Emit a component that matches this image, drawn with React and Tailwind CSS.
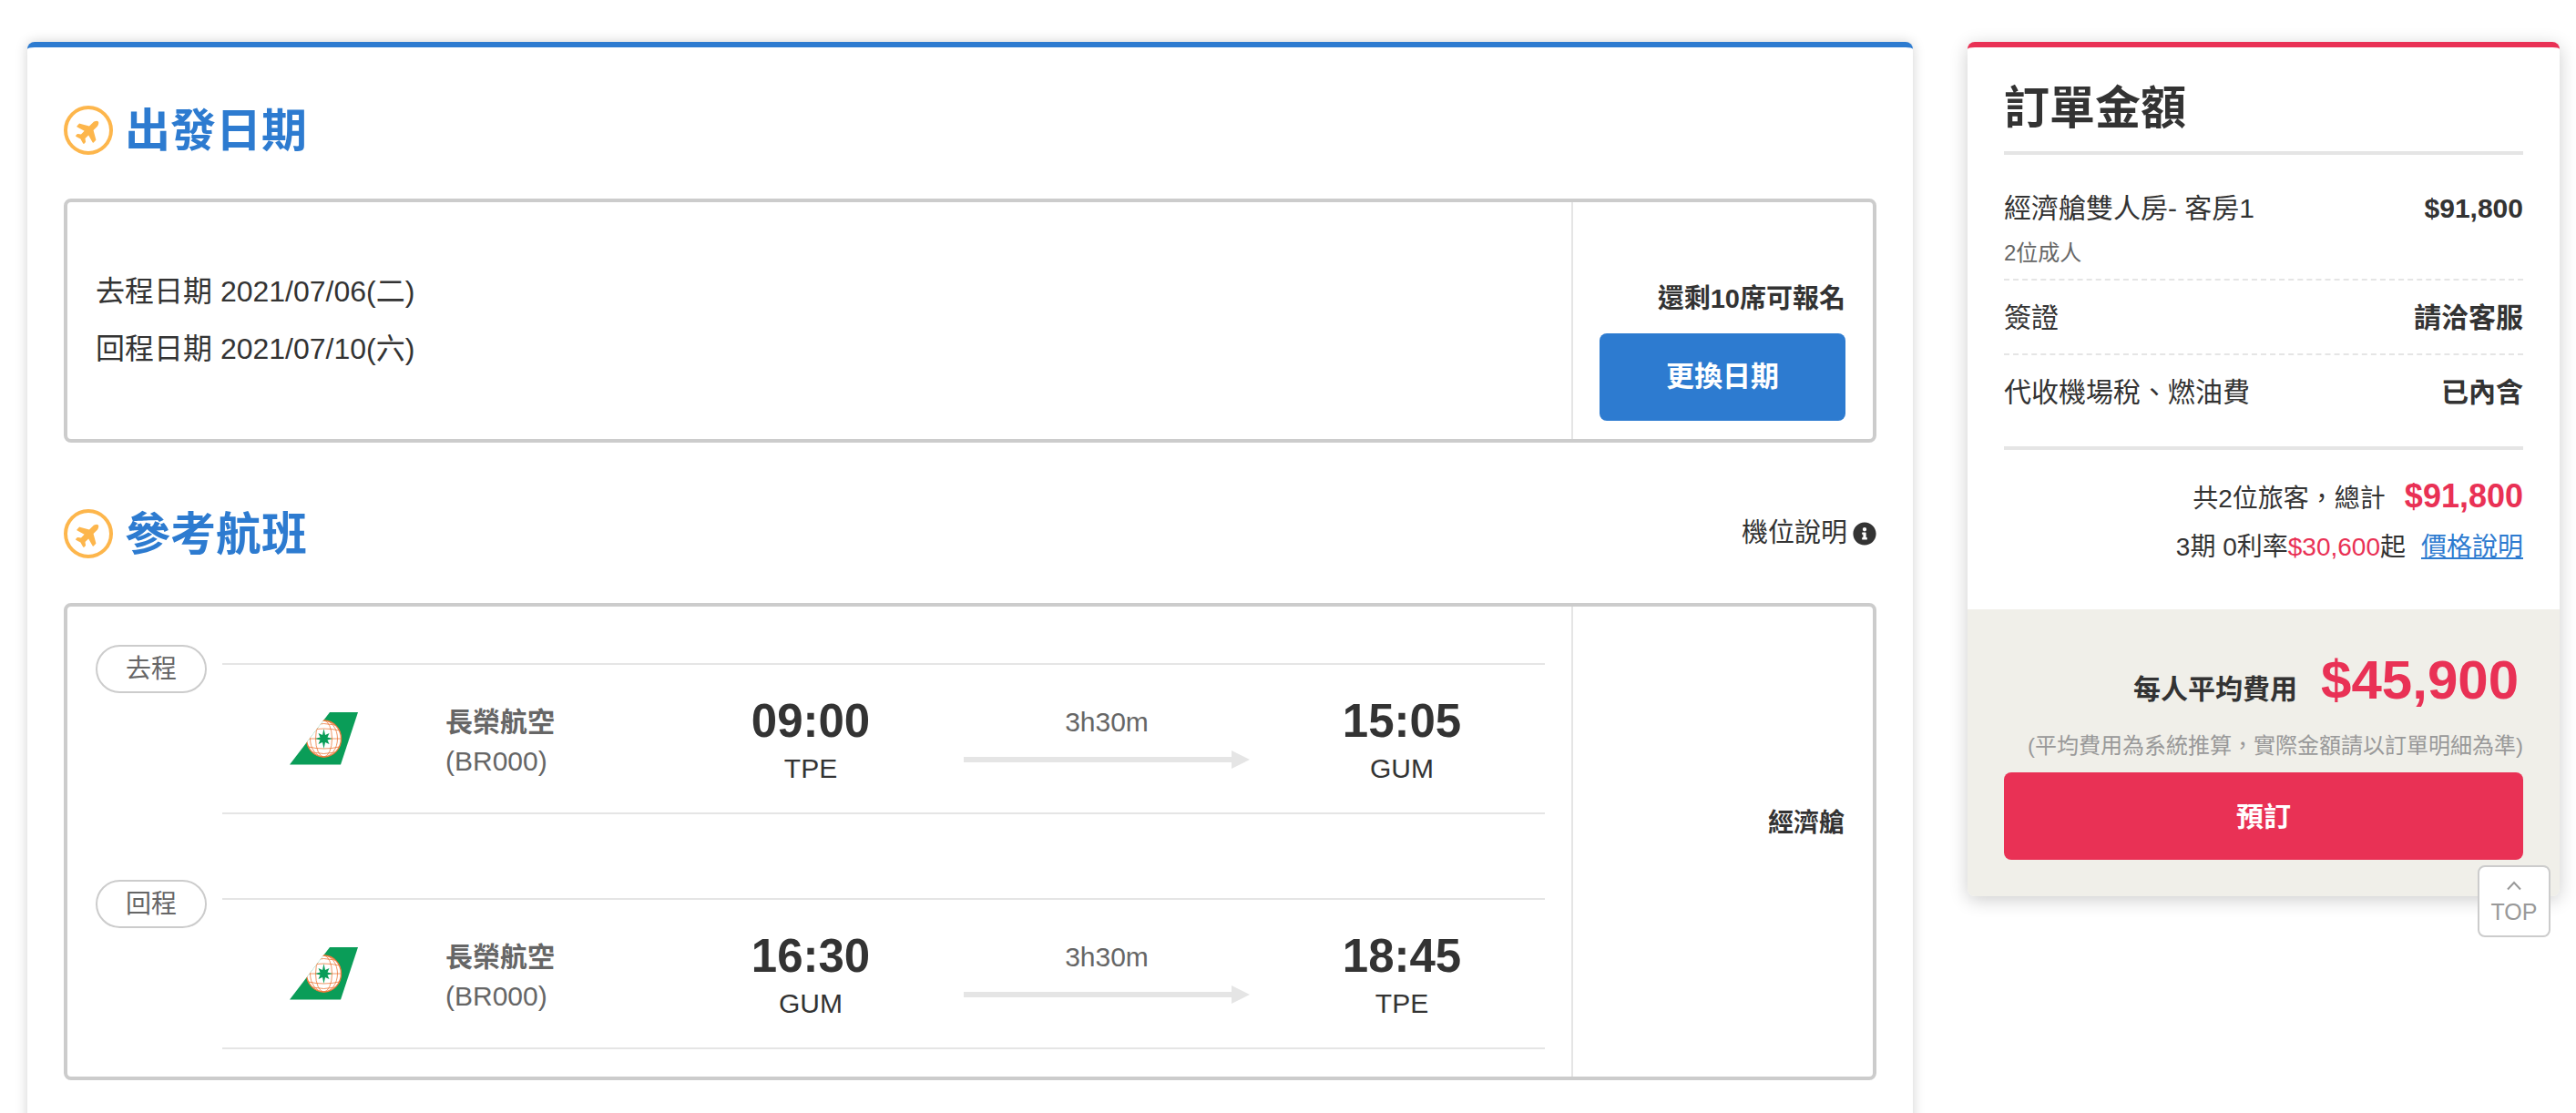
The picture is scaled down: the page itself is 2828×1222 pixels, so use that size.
import { FaPlane, FaInfoCircle } from 'react-icons/fa';

const legs = [
  { label: '去程', depart: '09:00', from: 'TPE', arrive: '15:05', to: 'GUM' },
  { label: '回程', depart: '16:30', from: 'GUM', arrive: '18:45', to: 'TPE' },
];

function SectionTitle({ children }) {
  return (
    <div className="flex items-center h-[54px]">
      <span className="flex items-center justify-center w-[54px] h-[54px] rounded-full border-[4px] border-[#fdb64c] shrink-0">
        <FaPlane className="w-[29px] h-[29px] text-[#fdb64c] -rotate-45" />
      </span>
      <h2 className="ml-[13px] text-[50px] leading-[54px] font-bold text-[#2d7bd0] translate-y-px">{children}</h2>
    </div>
  );
}

function EvaLogo({ id }) {
  const orange = '#ee7a3c';
  return (
    <svg width="76" height="58" viewBox="0 0 76 58" className="block">
      <defs>
        <clipPath id={id}>
          <polygon points="44,0 75,0 56,57.5 0,57.5" />
        </clipPath>
      </defs>
      <polygon points="44,0 75,0 56,57.5 0,57.5" fill="#0a9d58" />
      <g clipPath={`url(#${id})`}>
        <ellipse cx="37.5" cy="29" rx="19" ry="20" fill="#fff" stroke={orange} strokeWidth="1.4" />
        <g fill="none" stroke={orange} strokeWidth="0.8">
          <ellipse cx="37.5" cy="29" rx="9" ry="20" />
          <ellipse cx="37.5" cy="29" rx="15" ry="20" />
          <path d="M20.5 20 Q37.5 16 54.5 20" />
          <path d="M18.5 29 L56.5 29" />
          <path d="M20.5 38 Q37.5 42 54.5 38" />
          <path d="M25 14 Q37.5 11 50 14" />
          <path d="M25 44 Q37.5 47 50 44" />
        </g>
      </g>
      <polygon
        points="37.5,18 39,25 43.5,23 41.5,27.5 47,29 41.5,30.5 43.5,35 39,33 37.5,40 36,33 31.5,35 33.5,30.5 28,29 33.5,27.5 31.5,23 36,25"
        fill="#0a9d58"
      />
    </svg>
  );
}

function Leg({ leg }) {
  return (
    <div className="flex items-start">
      <span className="w-[122px] h-[53px] rounded-full border-2 border-[#ccc] flex items-center justify-center text-[28px] text-[#666] shrink-0">
        {leg.label}
      </span>
      <div className="ml-[17px] mt-[20px] w-[1452px] h-[166px] border-y-2 border-[#e5e5e5] grid grid-cols-[245px_261px_280px_370px_278px] items-center">
        <div className="pl-[74px]"><EvaLogo id={`tail-${leg.label}`} /></div>
        <div className="text-[30px] leading-[43px] text-[#666] translate-y-[3px]">
          <div className="font-bold">長榮航空</div>
          <div>(BR000)</div>
        </div>
        <div className="text-center text-[#333] translate-y-[4px]">
          <div className="text-[51px] leading-[52px] font-bold">{leg.depart}</div>
          <div className="text-[30px] leading-[42px] mt-[5px]">{leg.from}</div>
        </div>
        <div className="flex flex-col items-center -translate-y-[3px]">
          <div className="text-[30px] leading-[40px] text-[#666]">3h30m</div>
          <svg width="314" height="20" viewBox="0 0 314 20" className="block mt-[11px]">
            <rect x="0" y="7" width="295" height="6" fill="#e5e5e5" />
            <polygon points="294,0 314,10 294,20" fill="#e5e5e5" />
          </svg>
        </div>
        <div className="text-center text-[#333] translate-y-[4px]">
          <div className="text-[51px] leading-[52px] font-bold">{leg.arrive}</div>
          <div className="text-[30px] leading-[42px] mt-[5px]">{leg.to}</div>
        </div>
      </div>
    </div>
  );
}

function PriceRow({ label, value, dashed }) {
  return (
    <div className={`flex items-center justify-between text-[30px] text-[#333] ${dashed ? 'h-[82px] border-b-2 border-dashed border-[#e5e5e5]' : 'h-[80px]'}`}>
      <span>{label}</span>
      <span className="font-bold">{value}</span>
    </div>
  );
}

export default function App() {
  return (
    <div className="w-[2828px] h-[1222px] overflow-hidden bg-white pt-[46px] pl-[30px] flex items-start [font-family:'Liberation_Sans','Noto_Sans_CJK_TC',sans-serif] text-[#333]">

      {/* Main column */}
      <div className="w-[2070px] h-[1400px] shrink-0 bg-white rounded-t-[8px] border-t-[6px] border-[#2d7bd0] shadow-[0_0_14px_rgba(0,0,0,0.18)] px-[40px] pt-[64px]">
        <SectionTitle>出發日期</SectionTitle>

        <div className="mt-[48px] h-[268px] border-[4px] border-[#ccc] rounded-[8px] flex">
          <div className="flex-1 flex flex-col justify-center pl-[31px] text-[32px] leading-[63px]">
            <div>去程日期 2021/07/06(二)</div>
            <div>回程日期 2021/07/10(六)</div>
          </div>
          <div className="w-[331px] shrink-0 border-l-2 border-[#e5e5e5] flex flex-col items-end justify-end pr-[30px] pb-[20px]">
            <div className="text-[29px] leading-[40px] font-bold mb-[18px]">還剩10席可報名</div>
            <button className="w-[270px] h-[96px] rounded-[8px] bg-[#2d7bd0] text-white text-[31px] font-bold">更換日期</button>
          </div>
        </div>

        <div className="mt-[73px] flex items-center justify-between">
          <SectionTitle>參考航班</SectionTitle>
          <div className="flex items-center text-[29px]">
            機位說明
            <FaInfoCircle className="ml-[6px] w-[26px] h-[26px] text-[#333]" />
          </div>
        </div>

        <div className="mt-[49px] h-[524px] border-[4px] border-[#ccc] rounded-[8px] flex">
          <div className="flex-1 pl-[31px] pt-[42px] flex flex-col gap-[72px]">
            {legs.map(leg => <Leg key={leg.label} leg={leg} />)}
          </div>
          <div className="w-[331px] shrink-0 border-l-2 border-[#e5e5e5] flex items-center justify-end pr-[31px] pb-[40px] text-[28px] font-bold">
            經濟艙
          </div>
        </div>
      </div>

      {/* Order summary */}
      <div className="relative ml-[60px] w-[650px] shrink-0">
        <div className="bg-white rounded-[8px] border-t-[6px] border-[#e93155] shadow-[0_4px_20px_rgba(0,0,0,0.2)] overflow-hidden">
          <div className="px-[40px]">
            <h2 className="pt-[43px] pb-[23px] text-[50px] leading-[48px] font-bold border-b-[4px] border-[#e5e5e5]">訂單金額</h2>

            <div className="mt-[39px] flex justify-between text-[30px] leading-[40px]">
              <span>經濟艙雙人房- 客房1</span>
              <span className="font-bold">$91,800</span>
            </div>
            <div className="mt-[12px] pb-[11px] text-[24px] leading-[34px] text-[#666] border-b-2 border-dashed border-[#e5e5e5]">2位成人</div>
            <PriceRow label="簽證" value="請洽客服" dashed />
            <PriceRow label="代收機場稅、燃油費" value="已內含" />

            <div className="mt-[20px] border-t-[4px] border-[#e5e5e5] pt-[27px] text-right">
              <div className="flex items-baseline justify-end text-[28px] leading-[48px]">
                共2位旅客，總計
                <span className="ml-[21px] text-[36px] font-bold text-[#e93155]">$91,800</span>
              </div>
              <div className="mt-[5px] text-[28px] leading-[48px]">
                3期 0利率<span className="text-[#e93155]">$30,600</span>起
                <a className="ml-[17px] text-[#2d7bd0] underline">價格說明</a>
              </div>
            </div>
          </div>

          <div className="mt-[44px] bg-[#f0efe9] px-[40px] pt-[48px] pb-[40px]">
            <div className="flex items-baseline justify-end pr-[5px] leading-[60px]">
              <span className="text-[30px] font-bold">每人平均費用</span>
              <span className="ml-[26px] text-[60px] font-bold text-[#e93155]">$45,900</span>
            </div>
            <div className="mt-[14px] text-right text-[24px] leading-[36px] text-[#999] whitespace-nowrap">(平均費用為系統推算，實際金額請以訂單明細為準)</div>
            <button className="mt-[11px] block w-full h-[96px] rounded-[8px] bg-[#e93155] text-white text-[30px] font-bold">預訂</button>
          </div>
        </div>

        {/* Floating back-to-top button */}
        <div className="absolute right-[10px] top-[904px] w-[80px] h-[79px] bg-white border-2 border-[#ccc] rounded-[8px] flex flex-col items-center text-[#999]">
          <svg width="18" height="11" viewBox="0 0 18 11" className="mt-[15px] block">
            <polyline points="2,9.5 9,2 16,9.5" fill="none" stroke="#999" strokeWidth="2" />
          </svg>
          <span className="mt-[8px] text-[25px] leading-[30px]">TOP</span>
        </div>
      </div>
    </div>
  );
}
